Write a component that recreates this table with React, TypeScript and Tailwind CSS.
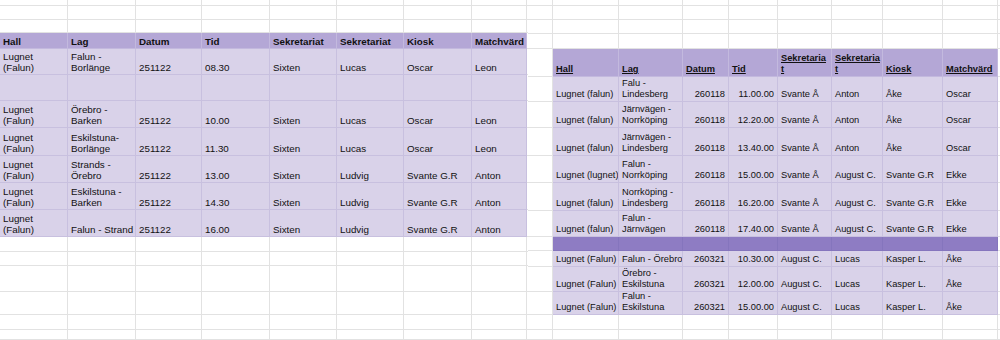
import React from "react";

type Kind = "w" | "h" | "d" | "b" | "rh";

const KIND: Record<Kind, string> = {
  w: "border-r border-b border-[#e2e2e2] bg-white",
  h: "border-r border-b border-[#c3b9de] bg-[#b4a7d6] font-bold",
  rh: "border-r border-b border-[#c3b9de] bg-[#b4a7d6] font-bold underline",
  d: "border-r border-b border-[#c8c0df] bg-[#d9d2e9]",
  b: "border-r border-b border-[#8575bd] bg-[#8e7cc3]",
};

function Cell({
  kind,
  lines,
  right,
}: {
  kind: Kind;
  lines?: string[];
  right?: boolean;
}) {
  return (
    <div
      className={`${KIND[kind]} flex flex-col justify-end overflow-hidden whitespace-nowrap px-[3px] pb-px ${
        right ? "items-end" : "items-start"
      }`}
    >
      {lines?.map((l, i) => (
        <span key={i} className="block">
          {l}
        </span>
      ))}
    </div>
  );
}

const leftHeader = ["Hall", "Lag", "Datum", "Tid", "Sekretariat", "Sekretariat", "Kiosk", "Matchvärd"];

const LF = ["Lugnet", "(Falun)"];
const leftData: (string[] | null)[][] = [
  [LF, ["Falun -", "Borlänge"], ["251122"], ["08.30"], ["Sixten"], ["Lucas"], ["Oscar"], ["Leon"]],
  [null, null, null, null, null, null, null, null],
  [LF, ["Örebro -", "Barken"], ["251122"], ["10.00"], ["Sixten"], ["Lucas"], ["Oscar"], ["Leon"]],
  [LF, ["Eskilstuna-", "Borlänge"], ["251122"], ["11.30"], ["Sixten"], ["Lucas"], ["Oscar"], ["Leon"]],
  [LF, ["Strands -", "Örebro"], ["251122"], ["13.00"], ["Sixten"], ["Ludvig"], ["Svante G.R"], ["Anton"]],
  [LF, ["Eskilstuna -", "Barken"], ["251122"], ["14.30"], ["Sixten"], ["Ludvig"], ["Svante G.R"], ["Anton"]],
  [LF, ["Falun - Strand"], ["251122"], ["16.00"], ["Sixten"], ["Ludvig"], ["Svante G.R"], ["Anton"]],
];

function LeftSheet() {
  const cells: React.ReactNode[] = [];
  const totalRows = 17;
  for (let r = 0; r < totalRows; r++) {
    for (let c = 0; c < 9; c++) {
      const key = `${r}-${c}`;
      if (c === 8) {
        cells.push(<Cell key={key} kind="w" />);
        continue;
      }
      if (r === 3) {
        cells.push(<Cell key={key} kind="h" lines={[leftHeader[c]]} />);
      } else if (r >= 4 && r <= 10) {
        const v = leftData[r - 4][c];
        cells.push(<Cell key={key} kind="d" lines={v ?? undefined} />);
      } else {
        cells.push(<Cell key={key} kind="w" />);
      }
    }
  }
  return (
    <div className="grid h-[340px] w-[528px] shrink-0 grid-cols-[68px_68px_66px_68px_67px_67px_68px_55px_1fr] grid-rows-[6px_14px_13px_16px_26px_26px_27px_28px_27px_27px_27px_15px_14px_26px_23px_15px_1fr] text-[9.8px] leading-[11px] text-[#111]">
      {cells}
    </div>
  );
}

const rightHeader: string[][] = [
  ["Hall"],
  ["Lag"],
  ["Datum"],
  ["Tid"],
  ["Sekretaria", "t"],
  ["Sekretaria", "t"],
  ["Kiosk"],
  ["Matchvärd"],
];

const rf = ["Lugnet (falun)"];
const RF = ["Lugnet (Falun)"];
const rightData: (string[][] | "bar")[] = [
  [rf, ["Falu -", "Lindesberg"], ["260118"], ["11.00.00"], ["Svante Å"], ["Anton"], ["Åke"], ["Oscar"]],
  [rf, ["Järnvägen -", "Norrköping"], ["260118"], ["12.20.00"], ["Svante Å"], ["Anton"], ["Åke"], ["Oscar"]],
  [rf, ["Järnvägen -", "Lindesberg"], ["260118"], ["13.40.00"], ["Svante Å"], ["Anton"], ["Åke"], ["Oscar"]],
  [["Lugnet (lugnet)"], ["Falun -", "Norrköping"], ["260118"], ["15.00.00"], ["Svante Å"], ["August C."], ["Svante G.R"], ["Ekke"]],
  [rf, ["Norrköping -", "Lindesberg"], ["260118"], ["16.20.00"], ["Svante Å"], ["August C."], ["Svante G.R"], ["Ekke"]],
  [rf, ["Falun -", "Järnvägen"], ["260118"], ["17.40.00"], ["Svante Å"], ["August C."], ["Svante G.R"], ["Ekke"]],
  "bar",
  [RF, ["Falun - Örebro"], ["260321"], ["10.30.00"], ["August C."], ["Lucas"], ["Kasper L."], ["Åke"]],
  [RF, ["Örebro -", "Eskilstuna"], ["260321"], ["12.00.00"], ["August C."], ["Lucas"], ["Kasper L."], ["Åke"]],
  [RF, ["Falun -", "Eskilstuna"], ["260321"], ["15.00.00"], ["August C."], ["Lucas"], ["Kasper L."], ["Åke"]],
];

function RightSheet() {
  const cells: React.ReactNode[] = [];
  const totalRows = 17;
  for (let r = 0; r < totalRows; r++) {
    for (let c = 0; c < 10; c++) {
      const key = `${r}-${c}`;
      if (c === 0 || c === 9) {
        cells.push(<Cell key={key} kind="w" />);
        continue;
      }
      const ci = c - 1;
      if (r === 4) {
        cells.push(<Cell key={key} kind="rh" lines={rightHeader[ci]} />);
      } else if (r >= 5 && r <= 14) {
        const row = rightData[r - 5];
        if (row === "bar") {
          cells.push(<Cell key={key} kind="b" />);
        } else {
          cells.push(<Cell key={key} kind="d" lines={row[ci]} right={ci === 2 || ci === 3} />);
        }
      } else {
        cells.push(<Cell key={key} kind="w" />);
      }
    }
  }
  return (
    <div className="grid h-[340px] w-[472px] shrink-0 grid-cols-[25px_66px_64px_46px_49px_54px_51px_60px_55px_1fr] grid-rows-[6px_14px_14px_15px_28px_25px_26px_28px_27px_28px_26px_14px_16px_25px_23px_15px_1fr] text-[9.3px] leading-[11px] text-[#111]">
      {cells}
    </div>
  );
}

export default function App() {
  return (
    <div className="flex h-[340px] w-[1000px] overflow-hidden bg-white font-['Liberation_Sans',Arial,sans-serif]">
      <LeftSheet />
      <RightSheet />
    </div>
  );
}
